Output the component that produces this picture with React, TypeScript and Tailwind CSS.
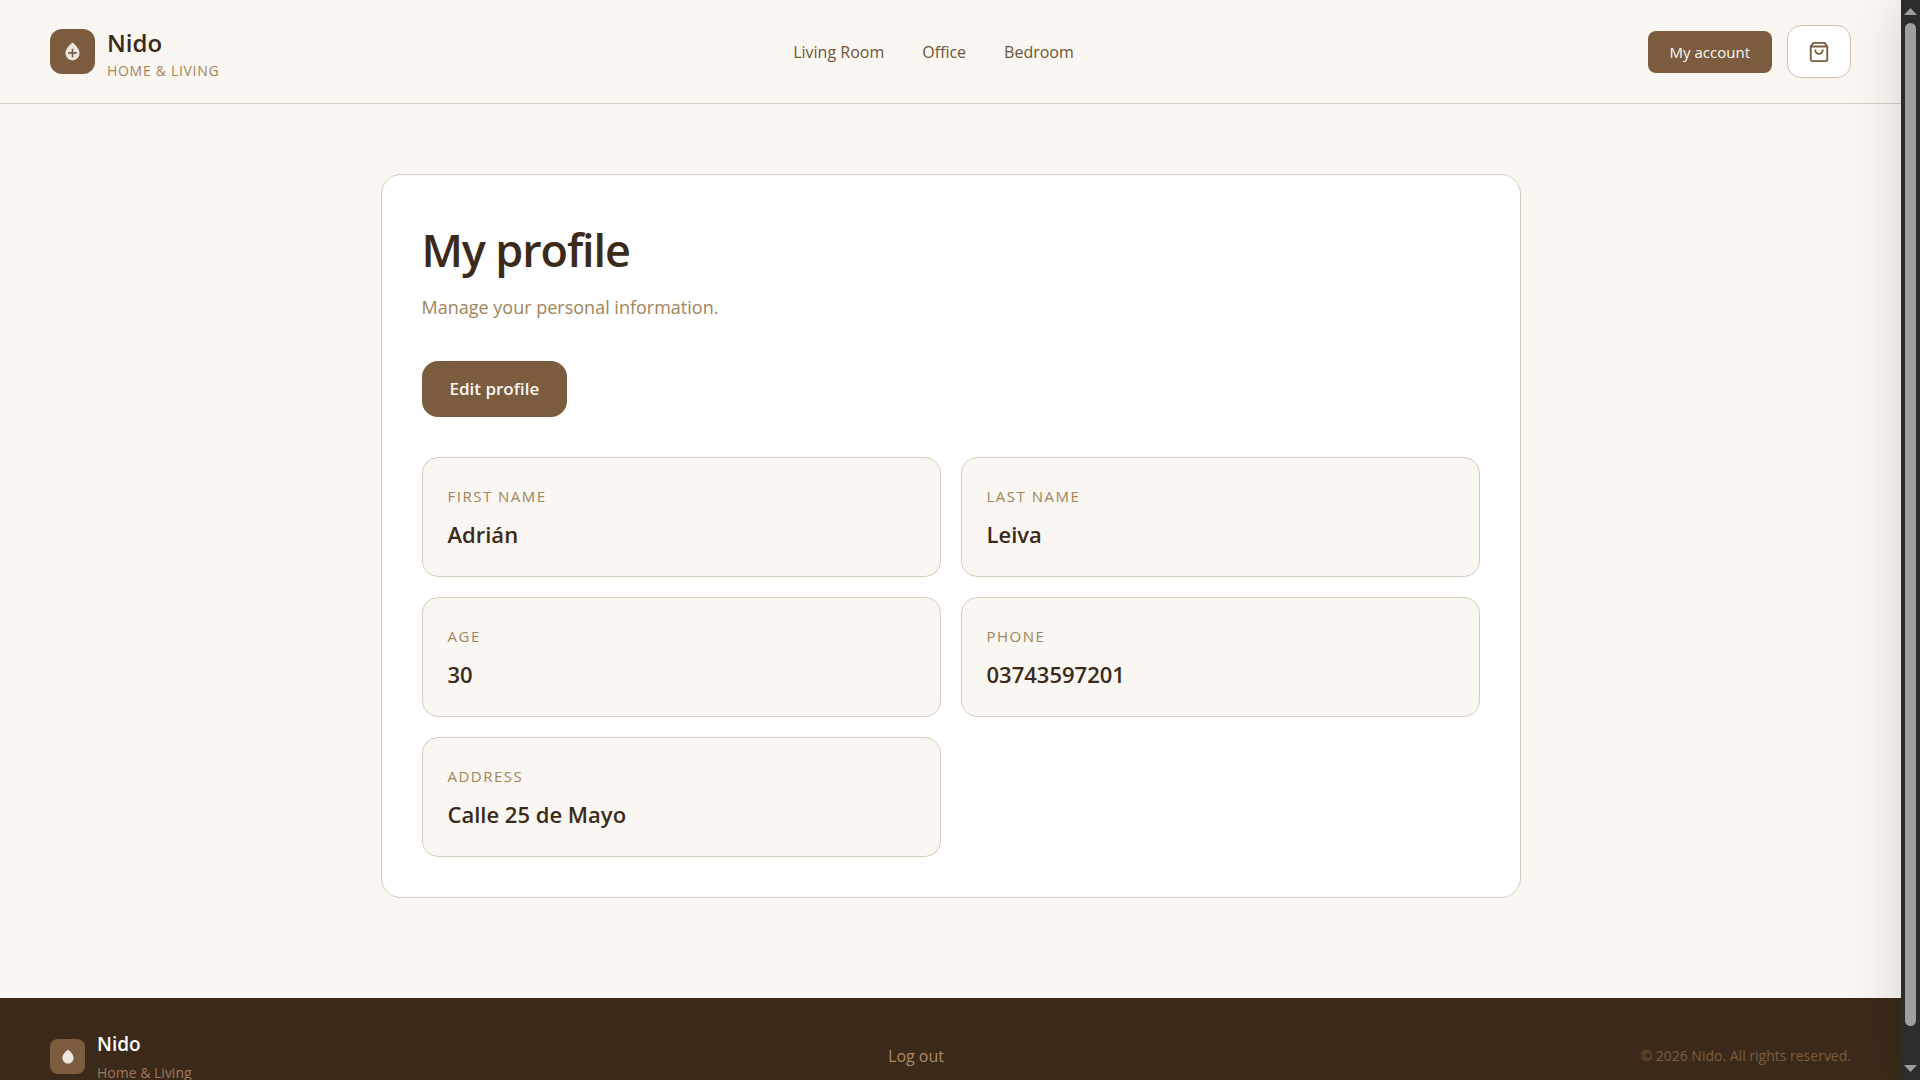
import { ReactNode } from "react";

const links = ["Living Room", "Office", "Bedroom"];

const fields = [
    { label: "First name", value: "Adrián" },
    { label: "Last name", value: "Leiva" },
    { label: "Age", value: "30" },
    { label: "Phone", value: "03743597201" },
    { label: "Address", value: "Calle 25 de Mayo" },
];

const Drop = ({ className, children }: { className: string; children?: ReactNode }) => (
    <svg viewBox="0 0 16 20" className={className} aria-hidden="true">
        <path
            d="M8 .5C5.6 2.6.5 6.6.5 12a7.5 7.5 0 0 0 15 0C15.500 6.600 10.400 2.600 8 .5Z"
            fill="#ebe6df"
        />
        {children}
    </svg>
);

const BagIcon = () => (
    <svg
        viewBox="0 0 24 24"
        className="size-[22px]"
        fill="none"
        stroke="#7b5c3e"
        strokeWidth="2"
        strokeLinecap="round"
        strokeLinejoin="round"
        aria-hidden="true"
    >
        <path d="M6 2 3 6v14a2 2 0 0 0 2 2h14a2 2 0 0 0 2-2V6l-3-4Z" />
        <path d="M3 6h18" />
        <path d="M16 10a4 4 0 0 1-8 0" />
    </svg>
);

const Header = () => (
    <header className="flex items-center justify-between border-b border-[#d6cdbc] px-[50px] py-6">
        <a href="#home" className="flex items-center gap-3">
            <span className="flex size-[45px] items-center justify-center rounded-xl bg-[#7b5c3e]">
                <Drop className="h-[19px] w-[15px]">
                    <path d="M8 7v9M3.500 11.500h9" stroke="#7b5c3e" strokeWidth="1.700" />
                </Drop>
            </span>
            <span className="flex flex-col">
                <span className="text-2xl leading-[38px] font-semibold">Nido</span>
                <span className="text-sm leading-[17px] tracking-wider text-[#a0845c] uppercase">
                    Home &amp; Living
                </span>
            </span>
        </a>
        <nav className="flex gap-[38px] text-base text-[#6f5338]">
            {links.map((link) => (
                <a key={link} href="#category">
                    {link}
                </a>
            ))}
        </nav>
        <div className="flex items-center gap-[15px]">
            <button className="rounded-lg bg-[#7b5c3e] px-[22px] py-2.5 text-[15px] leading-[22px] text-[#faf7f2]">
                My account
            </button>
            <button
                aria-label="Cart"
                className="flex h-[53px] w-16 items-center justify-center rounded-[14px] border border-[#cfc0aa] bg-white"
            >
                <BagIcon />
            </button>
        </div>
    </header>
);

const Profile = () => (
    <main className="px-10 pt-[70px] pb-[100px]">
        <section className="mx-auto max-w-[1140px] rounded-[20px] border border-[#d6cdbc] bg-white p-10">
            <h1 className="text-[45px] leading-[70px] font-semibold tracking-tight">
                My profile
            </h1>
            <p className="mt-2 text-lg leading-7 text-[#a0845c]">
                Manage your personal information.
            </p>
            <button className="mt-10 rounded-2xl bg-[#7b5c3e] px-7 py-4 text-[17px] leading-6 font-semibold text-[#faf7f2]">
                Edit profile
            </button>
            <dl className="mt-10 grid grid-cols-2 gap-5">
                {fields.map(({ label, value }) => (
                    <div
                        key={label}
                        className="rounded-2xl border border-[#d6cdbc] bg-[#faf7f2] p-[25px]"
                    >
                        <dt className="text-[15px] leading-[26px] tracking-widest text-[#a0845c] uppercase">
                            {label}
                        </dt>
                        <dd className="mt-2 text-[22px] leading-[34px] font-semibold">
                            {value}
                        </dd>
                    </div>
                ))}
            </dl>
        </section>
    </main>
);

const Footer = () => (
    <footer className="flex items-center justify-between bg-[#3b2a1a] px-[50px] py-[29px]">
        <a href="#home" className="flex items-center gap-3">
            <span className="flex size-[35px] items-center justify-center rounded-lg bg-[#7b5c3e]">
                <Drop className="h-[15px] w-3" />
            </span>
            <span className="flex flex-col">
                <span className="text-[19px] leading-[34px] font-semibold text-white">
                    Nido
                </span>
                <span className="text-sm leading-6 text-[#a0785a]">Home &amp; Living</span>
            </span>
        </a>
        <button className="text-base text-[#b08968]">Log out</button>
        <p className="text-sm text-[#7b5c3e]">© 2026 Nido. All rights reserved.</p>
    </footer>
);

// closed drawer, only its shadow reaches into the page
const CartDrawer = () => (
    <aside
        aria-hidden="true"
        className="pointer-events-none absolute inset-y-0 left-full w-96 bg-white shadow-[0_0_50px_rgba(0,0,0,0.15)]"
    />
);

const Scrollbar = () => (
    <div
        aria-hidden="true"
        className="flex w-[19px] shrink-0 flex-col items-center justify-between bg-[#2c2c2c] py-2"
    >
        <svg viewBox="0 0 13 7" className="h-[7px] w-[13px]" fill="#9f9f9f">
            <path d="M6.500 0 13 7H0Z" />
        </svg>
        <div className="mt-2 mb-[39px] w-[11px] flex-1 rounded-full bg-[#9f9f9f]" />
        <svg viewBox="0 0 13 7" className="h-[7px] w-[13px]" fill="#9f9f9f">
            <path d="M0 0h13L6.500 7Z" />
        </svg>
    </div>
);

const App = () => {
    return (
        <div className="flex h-screen font-['Open_Sans',sans-serif] text-[#3b2a1a]">
            <div className="relative min-w-0 flex-1 overflow-hidden">
                <div className="h-full overflow-y-auto bg-[#faf7f2] [scrollbar-width:none]">
                    <Header />
                    <Profile />
                    <Footer />
                </div>
                <CartDrawer />
            </div>
            <Scrollbar />
        </div>
    );
};

export default App;
